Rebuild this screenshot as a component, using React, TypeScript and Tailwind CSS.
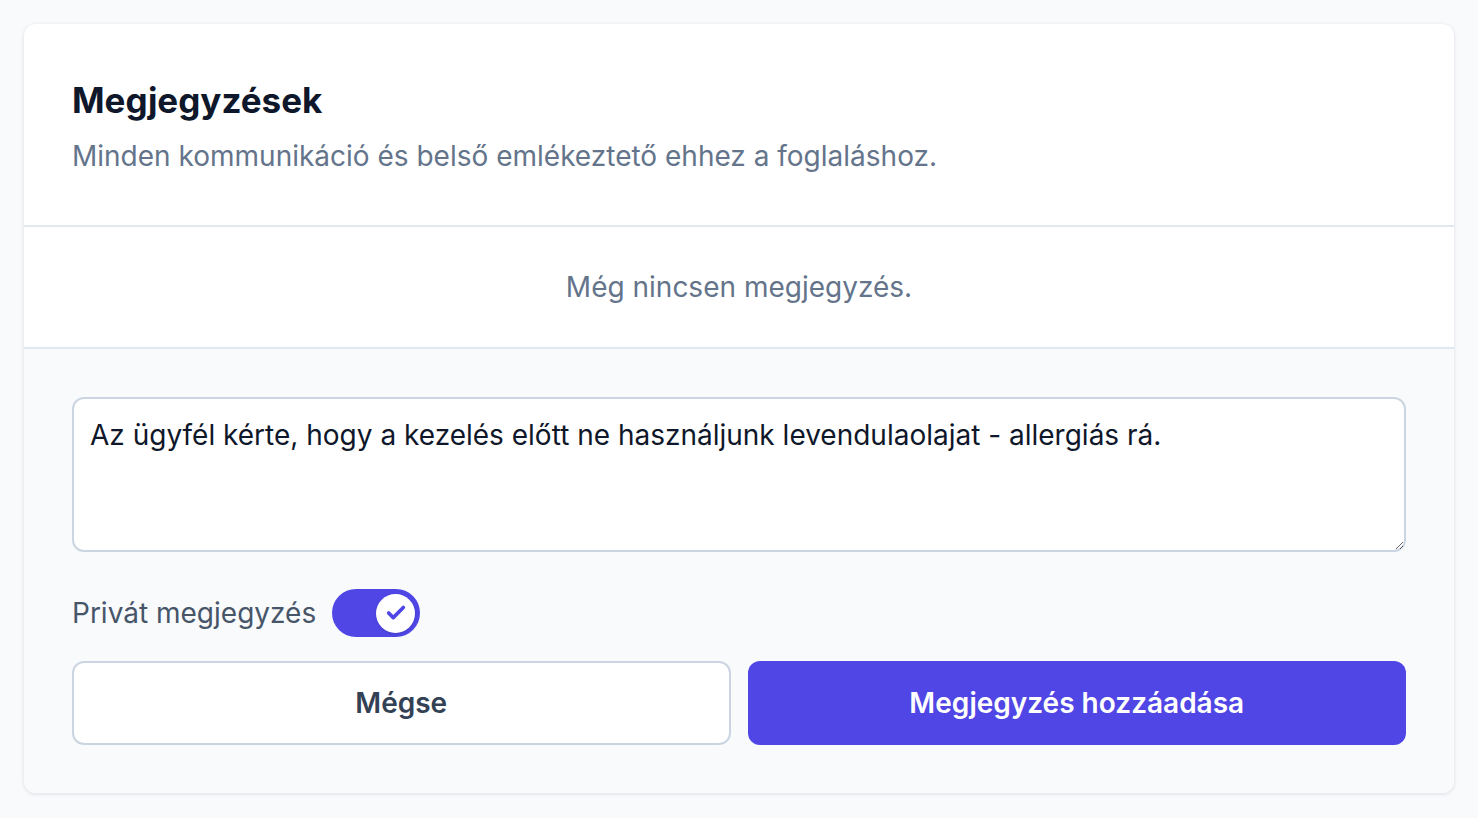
import { Check } from "lucide-react";

export default function App() {
  return (
    <div
      className="min-h-screen bg-[#f8fafc] p-[24px]"
      style={{ fontFamily: "Inter, 'Noto Sans', sans-serif" }}
    >
      <div className="overflow-hidden rounded-[12px] bg-white shadow-[0_1px_4px_rgba(15,23,42,0.12)]">
        {/* header */}
        <div className="border-b-2 border-[#e2e8f0] px-[48px] pb-[48px] pt-[52px]">
          <h2 className="text-[35px] font-bold leading-[48px] text-[#0f172a]">
            Megjegyzések
          </h2>
          <p className="mt-[11px] text-[28px] leading-[42px] text-[#64748b]">
            Minden kommunikáció és belső emlékeztető ehhez a foglaláshoz.
          </p>
        </div>

        {/* empty state */}
        <div className="border-b-2 border-[#e2e8f0] py-[39px] text-center text-[28px] leading-[42px] text-[#64748b]">
          Még nincsen megjegyzés.
        </div>

        {/* form */}
        <div className="bg-[#f8fafc] p-[48px]">
          <textarea
            className="block h-[155px] w-full rounded-[12px] border-2 border-[#cbd5e1] bg-white px-[16px] py-[15px] text-[28px] leading-[42px] text-[#0f172a] outline-none"
            defaultValue="Az ügyfél kérte, hogy a kezelés előtt ne használjunk levendulaolajat - allergiás rá."
          />

          <div className="mt-[37px] flex items-center gap-[16px]">
            <span className="text-[28px] leading-[42px] text-[#475569]">
              Privát megjegyzés
            </span>
            <button className="flex h-[48px] w-[88px] items-center justify-end rounded-full bg-[#4f46e5] px-[5px]">
              <span className="flex h-[39px] w-[39px] items-center justify-center rounded-full bg-white shadow-sm">
                <Check className="h-[22px] w-[22px] text-[#4f46e5]" strokeWidth={4} />
              </span>
            </button>
          </div>

          <div className="mt-[24px] grid grid-cols-2 gap-[17px]">
            <button className="h-[84px] rounded-[12px] border-2 border-[#cbd5e1] bg-white text-[28px] font-semibold text-[#334155]">
              Mégse
            </button>
            <button className="h-[84px] rounded-[12px] bg-[#4f46e5] text-[28px] font-semibold text-white">
              Megjegyzés hozzáadása
            </button>
          </div>
        </div>
      </div>
    </div>
  );
}
